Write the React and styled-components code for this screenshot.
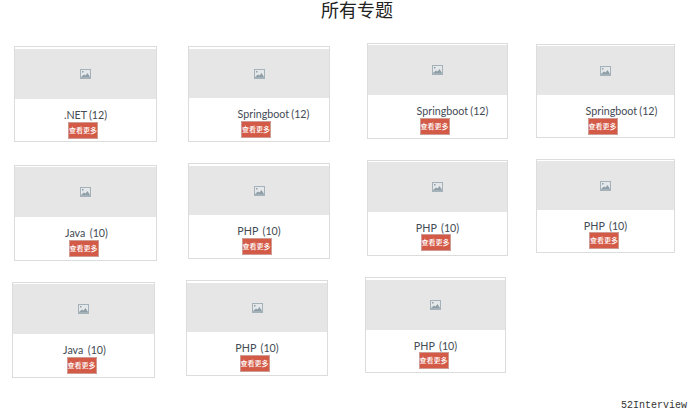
import React from "react";
import styled, { createGlobalStyle } from "styled-components";

const GlobalStyle = createGlobalStyle`
  html, body {
    margin: 0;
    padding: 0;
    background: #fff;
  }
`;

const Page = styled.div`
  width: 698px;
  height: 420px;
  overflow: hidden;
  display: flex;
  flex-direction: column;
`;

const Title = styled.h1`
  margin: 0 0 21px 16px;
  height: 22px;
  font-family: "Noto Sans CJK SC", "Noto Sans", sans-serif;
  font-size: 18px;
  line-height: 19px;
  font-weight: 400;
  color: #222;
  text-align: center;
`;

const Row = styled.div`
  display: flex;
  align-items: flex-start;
  margin-top: ${(p) => p.$top}px;
`;

const Card = styled.div`
  box-sizing: border-box;
  flex: none;
  width: ${(p) => p.$w}px;
  height: ${(p) => p.$h}px;
  margin-left: ${(p) => p.$gap}px;
  margin-top: ${(p) => p.$drop}px;
  padding-top: ${(p) => p.$pad}px;
  border: 1px solid #dcdcdc;
  background: #fff;
  display: flex;
  flex-direction: column;
  align-items: center;
`;

const Thumb = styled.div`
  align-self: stretch;
  height: ${(p) => p.$h}px;
  background: #e6e6e6;
  display: flex;
  align-items: center;
  justify-content: center;
  flex: none;
`;

const Label = styled.div`
  margin: 9px 0 0 ${(p) => p.$shift}px;
  font-family: "Lato", "Noto Sans", sans-serif;
  font-size: 10.7px;
  line-height: 14px;
  word-spacing: -0.5px;
  color: #434b54;
  white-space: pre;
`;

const MoreButton = styled.a`
  box-sizing: border-box;
  width: 30px;
  height: 17px;
  margin-top: ${(p) => (p.$up ? -1 : 0)}px;
  margin-left: ${(p) => p.$shift}px;
  border: 1px solid #cf9c94;
  background: #d35a47;
  color: #fff;
  font-family: "Noto Sans CJK SC", sans-serif;
  font-size: 7px;
  font-weight: 500;
  line-height: 15px;
  text-align: center;
  white-space: nowrap;
`;

const Footer = styled.div`
  margin-top: 21px;
  padding-right: 11px;
  text-align: right;
  font-family: "Liberation Mono", monospace;
  font-size: 10px;
  line-height: 14px;
  color: #333;
`;

const ImageIcon = () => (
  <svg width="11" height="10" viewBox="0 0 11 10">
    <rect x="0" y="0" width="11" height="10" fill="#a4b1b9" />
    <rect x="1" y="1" width="9" height="7" fill="#e4e8ea" />
    <rect x="2" y="2" width="1.5" height="1.5" fill="#8f9ea7" />
    <path d="M1 8 L4 5.5 L5.5 6.5 L7.5 4 L10 8 Z" fill="#8f9ea7" />
  </svg>
);

const rows = [
  {
    top: 0,
    cards: [
      { name: ".NET (12)", w: 143, h: 96, gap: 14, drop: 3, pad: 2, thumb: 50, tx: 0, bx: -5 },
      { name: "Springboot (12)", w: 142, h: 96, gap: 31, drop: 3, pad: 2, thumb: 49, tx: 29, bx: -6 },
      { name: "Springboot (12)", w: 141, h: 96, gap: 37, drop: 0, pad: 1, thumb: 50, tx: 30, bx: -6 },
      { name: "Springboot (12)", w: 139, h: 94, gap: 28, drop: 1, pad: 1, thumb: 49, tx: 32, bx: -6 },
    ],
  },
  {
    top: 17,
    cards: [
      { name: "Java  (10)", w: 143, h: 96, gap: 14, drop: 6, pad: 1, thumb: 50, tx: 2, bx: -4 },
      { name: "PHP  (10)", w: 142, h: 96, gap: 31, drop: 4, pad: 2, thumb: 49, tx: 0, bx: -5 },
      { name: "PHP  (10)", w: 141, h: 96, gap: 37, drop: 1, pad: 1, thumb: 50, tx: 0, bx: -4, up: true },
      { name: "PHP  (10)", w: 139, h: 94, gap: 28, drop: 0, pad: 1, thumb: 49, tx: 0, bx: -3, up: true },
    ],
  },
  {
    top: 16,
    cards: [
      { name: "Java  (10)", w: 143, h: 96, gap: 12, drop: 5, pad: 1, thumb: 50, tx: 2, bx: -4 },
      { name: "PHP  (10)", w: 142, h: 96, gap: 31, drop: 3, pad: 2, thumb: 49, tx: 0, bx: -5 },
      { name: "PHP  (10)", w: 141, h: 96, gap: 37, drop: 0, pad: 2, thumb: 50, tx: 0, bx: -4, up: true },
    ],
  },
];

const App = () => {
  return (
    <Page>
      <GlobalStyle />
      <Title>所有专题</Title>
      {rows.map((row, i) => (
        <Row key={i} $top={row.top}>
          {row.cards.map((c, j) => (
            <Card key={j} $w={c.w} $h={c.h} $gap={c.gap} $drop={c.drop} $pad={c.pad}>
              <Thumb $h={c.thumb}>
                <ImageIcon />
              </Thumb>
              <Label $shift={c.tx}>{c.name}</Label>
              <MoreButton $shift={c.bx} $up={c.up}>查看更多</MoreButton>
            </Card>
          ))}
        </Row>
      ))}
      <Footer>52Interview</Footer>
    </Page>
  );
};

export default App;
